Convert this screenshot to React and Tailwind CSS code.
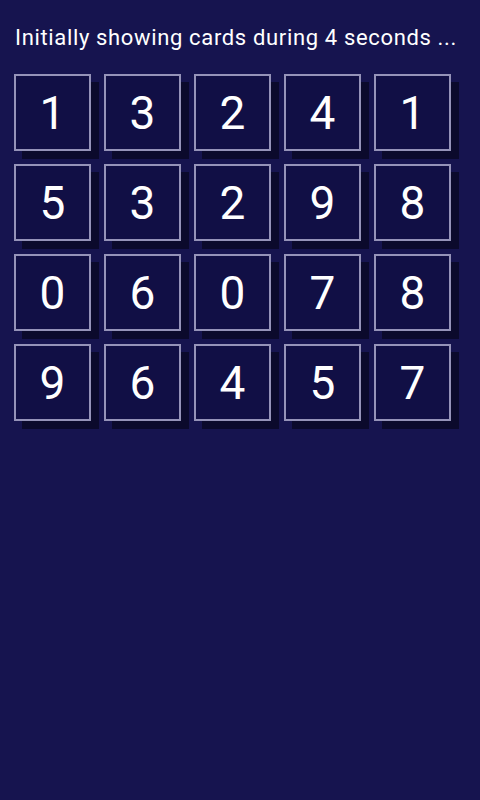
const rows = [
  [1, 3, 2, 4, 1],
  [5, 3, 2, 9, 8],
  [0, 6, 0, 7, 8],
  [9, 6, 4, 5, 7],
]

function Card({ value }) {
  return (
    <div className="relative w-[77px] h-[77px]">
      <div className="absolute left-[8px] top-[8px] w-[77px] h-[77px] bg-[#0b0a2c]" />
      <div className="relative w-[77px] h-[77px] bg-[#110f45] border-2 border-[#9593b9] flex items-center justify-center text-white text-[46px] leading-none">
        {value}
      </div>
    </div>
  )
}

export default function App() {
  return (
    <div className="w-[480px] h-[800px] bg-[#16144f] font-['Roboto',sans-serif] pt-[23px]">
      <div className="pl-[15px] text-white text-[22px] leading-[30px] tracking-[0.65px]">
        Initially showing cards during 4 seconds ...
      </div>
      <div className="mt-[21px] pl-[14px] flex flex-col gap-[13px]">
        {rows.map((row, r) => (
          <div key={r} className="flex gap-[13px]">
            {row.map((v, i) => (
              <Card key={i} value={v} />
            ))}
          </div>
        ))}
      </div>
    </div>
  )
}
